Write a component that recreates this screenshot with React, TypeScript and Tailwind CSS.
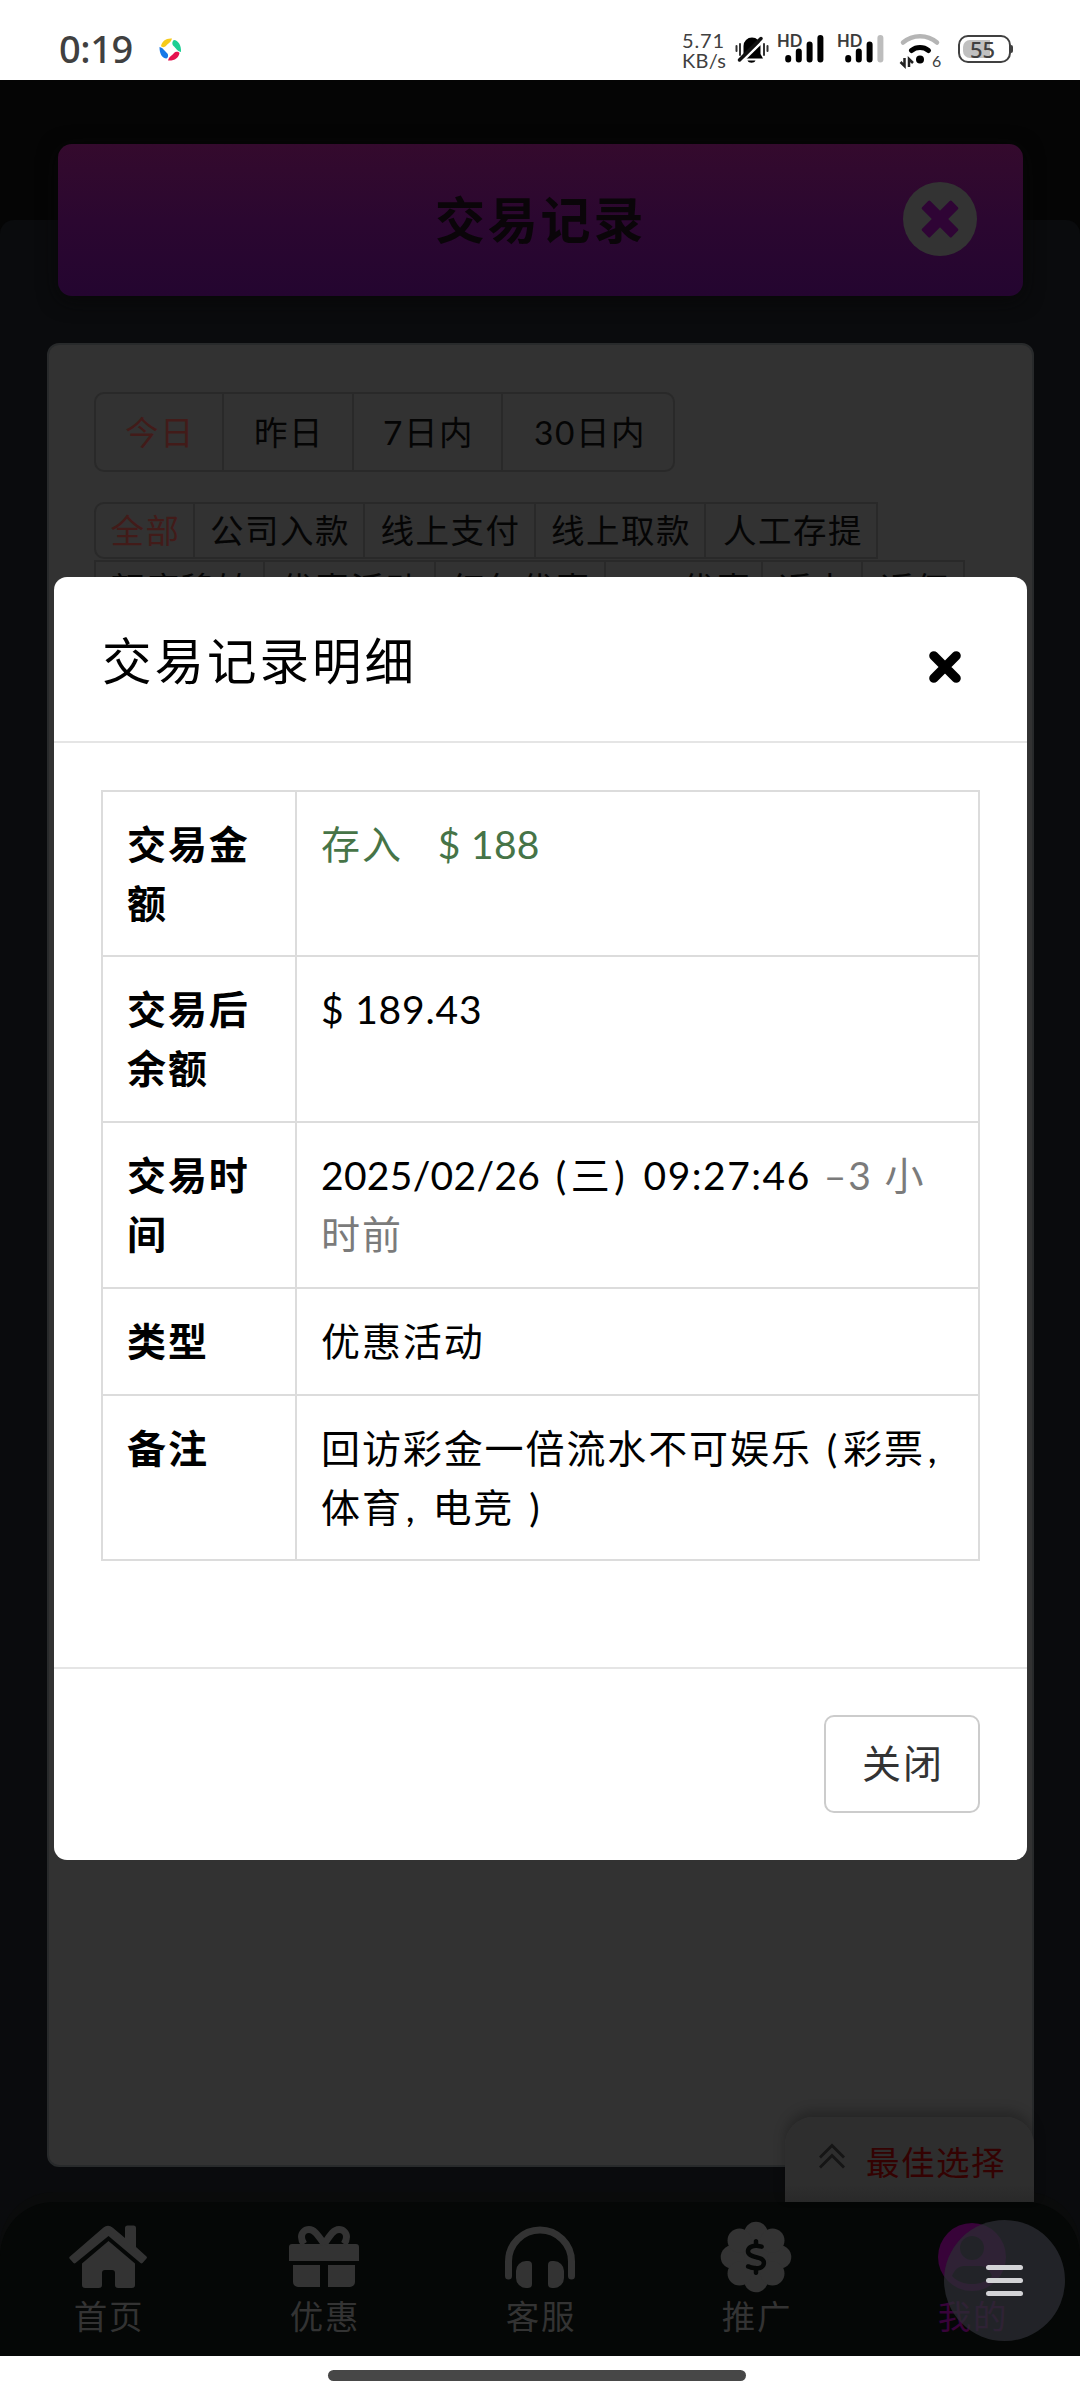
import { FaDollarSign } from "react-icons/fa6";
import type { ReactNode } from "react";

const ranges = [
  { label: "今日", width: "w-[128px]" },
  { label: "昨日", width: "w-[130px]" },
  { label: "7日内", width: "w-[149px]" },
  { label: "30日内", width: "w-[172px]" },
];

const typesTop = [
  { label: "全部", width: "w-[99px]" },
  { label: "公司入款", width: "w-[170px]" },
  { label: "线上支付", width: "w-[171px]" },
  { label: "线上取款", width: "w-[170px]" },
  { label: "人工存提", width: "w-[172px]" },
];

const typesBottom = [
  { label: "额度移转", width: "w-[169px]" },
  { label: "优惠活动", width: "w-[171px]" },
  { label: "红包优惠", width: "w-[170px]" },
  { label: "App优惠", width: "w-[157px]" },
  { label: "返水", width: "w-[100px]" },
  { label: "返佣", width: "w-[102px]" },
];

const details: { label: string; height: string; value: ReactNode }[] = [
  {
    label: "交易金额",
    height: "h-[165px]",
    value: (
      <span className="text-[#467447]">
        存入<span className="ml-[35px] tracking-[0.3px]">$ 188</span>
      </span>
    ),
  },
  {
    label: "交易后余额",
    height: "h-[166px]",
    value: <span className="tracking-[0.8px]">$ 189.43</span>,
  },
  {
    label: "交易时间",
    height: "h-[166px]",
    value: (
      <>
        <span className="tracking-[0.3px]">2025/02/26</span>
        <span className="ml-[5px] tracking-[0.5px]">
          {" "}(<span className="mx-[4px]">三</span>)
        </span>
        <span className="ml-[7px] tracking-[1.500px]"> 09:27:46</span>
        <span className="ml-px text-[#7b7b7b]">
          {" "}–3 小<br />
          时前
        </span>
      </>
    ),
  },
  { label: "类型", height: "h-[107px]", value: "优惠活动" },
  {
    label: "备注",
    height: "h-[165px]",
    value: (
      <>
        回访彩金一倍流水不可娱乐<span className="mr-[4px] ml-[3px]"> (</span>彩票<span className="ml-[3px]">,</span>
        <br />
        体育<span className="mr-[4px] ml-[3px]">,</span> 电竞<span className="ml-[3px]"> )</span>
      </>
    ),
  },
];

function HomeIcon() {
  return (
    <svg width="80" height="64" viewBox="0 0 80 64" fill="currentColor">
      <path d="M2 31.500 35.500 2.500a7 7 0 0 1 9 0L57 13V3a2.500 2.500 0 0 1 2.500-2.500h6A2.500 2.500 0 0 1 68 3v19l10.500 9.500a1.500 1.500 0 0 1 0 2l-4 4.500a1.500 1.500 0 0 1-2 0L40.500 11 7.500 38a1.500 1.500 0 0 1-2 0l-4-4.500a1.500 1.500 0 0 1 .5-2z" />
      <path d="M40.500 16 67 38.500V60a3 3 0 0 1-3 3H50a3 3 0 0 1-3-3V48a3 3 0 0 0-3-3h-7a3 3 0 0 0-3 3v12a3 3 0 0 1-3 3H17a3 3 0 0 1-3-3V38.500z" />
    </svg>
  );
}

function GiftIcon() {
  return (
    <svg width="72" height="64" viewBox="0 0 72 64" fill="currentColor">
      <path d="M4 19h64a3 3 0 0 1 3 3v14H1V22a3 3 0 0 1 3-3zM5 40h27v22H10a5 5 0 0 1-5-5zM40 40h27v17a5 5 0 0 1-5 5H40z" />
      <path
        d="M36.300 19C29 9 26 4.500 21 4.500a7.500 7.500 0 0 0-7.500 7.500c0 3 1 5 2.500 7M36.300 19C43 9 46 4.500 51 4.500a7.500 7.500 0 0 1 7.500 7.500c0 3-1 5-2.500 7"
        fill="none"
        stroke="currentColor"
        strokeWidth="7"
      />
    </svg>
  );
}

function HeadphonesIcon() {
  return (
    <svg width="72" height="64" viewBox="0 0 72 64" fill="currentColor">
      <path
        d="M4.500 51V36.500a31.500 31.500 0 0 1 63 0V51"
        fill="none"
        stroke="currentColor"
        strokeWidth="7"
        strokeLinecap="round"
      />
      <path d="M22 36h2a4 4 0 0 1 4 4v19a4 4 0 0 1-4 4h-2a10 10 0 0 1-10-10v-7a10 10 0 0 1 10-10zM50 36h-2a4 4 0 0 0-4 4v19a4 4 0 0 0 4 4h2a10 10 0 0 0 10-10v-7a10 10 0 0 0-10-10z" />
    </svg>
  );
}

function BadgeIcon() {
  return (
    <svg width="72" height="72" viewBox="0 0 72 72" fill="currentColor">
      <circle cx="36" cy="36" r="26" />
      <circle cx="36" cy="12.500" r="11.800" />
      <circle cx="36" cy="59.500" r="11.800" />
      <circle cx="12.500" cy="36" r="11.800" />
      <circle cx="59.500" cy="36" r="11.800" />
      <circle cx="19.500" cy="19.500" r="12" />
      <circle cx="52.500" cy="19.500" r="12" />
      <circle cx="19.500" cy="52.500" r="12" />
      <circle cx="52.500" cy="52.500" r="12" />
      <FaDollarSign x="18" y="18" size={36} color="#050706" />
    </svg>
  );
}

function UserIcon() {
  return (
    <svg width="68" height="68" viewBox="0 0 68 68">
      <circle cx="34" cy="34" r="34" fill="currentColor" />
      <circle cx="34" cy="25" r="12" fill="#050706" />
      <path d="M14 53c2.500-6.500 7-10 12-10h16c5 0 9.500 3.500 12 10-5 5.500-12 8-20 8s-15-2.500-20-8z" fill="#050706" />
    </svg>
  );
}

const navItems = [
  { label: "首页", icon: <HomeIcon />, color: "text-[#333333]" },
  { label: "优惠", icon: <GiftIcon />, color: "text-[#333333]" },
  { label: "客服", icon: <HeadphonesIcon />, color: "text-[#333333]" },
  { label: "推广", icon: <BadgeIcon />, color: "text-[#333333]" },
  { label: "我的", icon: <UserIcon />, color: "text-[#380339]" },
];

function SignalBars({ weak }: { weak?: boolean }) {
  return (
    <div className="flex h-[30px] w-[47px] items-start">
      <span className="h-4 w-[23px] text-[16.500px] leading-4 font-bold text-[#3c3c3c]">HD</span>
      <svg className="-ml-[15px] mt-px shrink-0" width="39" height="30" viewBox="0 0 39 30" strokeWidth="6" strokeLinecap="round">
        <path d="M3.200 24v1.500M13.800 17.500v8M24.600 10.500v15" stroke="#000" />
        <path d="M35.400 4v21.500" stroke={weak ? "#bdbdbd" : "#000"} />
      </svg>
    </div>
  );
}

function StatusBar() {
  return (
    <div className="flex h-20 justify-between bg-white pr-[67px] pl-[59px] text-[#404040]">
      <div className="flex">
        <span className="mt-[23px] w-[100px] font-['Noto_Sans'] text-[38px] leading-[50px] font-medium tracking-[-0.4px]">0:19</span>
        <svg className="mt-[38px]" width="23" height="23" viewBox="0 0 23 23">
          <path d="M2 8C3 3 7 0 13 .5c-1 4-4 5-6 7.500-1.500 1.600-4 1.500-5 0z" fill="#f6cb1c" />
          <path d="M15 2c4 .5 7.500 5 7 12-4-1-5-4-7.500-6-1.600-1.500-1.500-5 .5-6z" fill="#1ccf93" />
          <path d="M20.500 15c-1 5-5 8-11.500 7.500 1-4 4-5 6-7.500 1.500-1.600 4.500-1.500 5.500 0z" fill="#e5134f" />
          <path d="M7.500 20.500C3 20 .5 16 .5 9c4 1 5 4 7.500 6 1.600 1.500 1.500 4.500-.5 5.500z" fill="#1879e8" />
        </svg>
      </div>
      <div className="flex">
        <div className="mt-[31px] w-[53px] text-[20px] leading-[19.500px]">
          <div className="tracking-[0.9px]">5.71</div>
          <div className="tracking-[0.3px]">KB/s</div>
        </div>
        <svg className="mt-[36px] mr-[8px]" width="34" height="28" viewBox="0 0 34 28">
          <path d="M8.500 21V10a8.500 8.500 0 0 1 17 0v8l2.500 4.500H8zM12.500 24.500h8c-1 3-7 3-8 0z" fill="#000" />
          <path d="M1.500 10v5M5 8v11M29 8v11M32.500 10v5" stroke="#333" strokeWidth="2" strokeLinecap="round" />
          <path d="M6 26.500 29 4" stroke="#fff" strokeWidth="2.500" />
          <path d="M4.500 24 26 2.500" stroke="#111" strokeWidth="3.500" strokeLinecap="round" />
        </svg>
        <div className="mt-[33px] mr-[13px]"><SignalBars /></div>
        <div className="mt-[33px] mr-[15px]"><SignalBars weak /></div>
        <svg className="mt-[32px] mr-[14px]" width="46" height="42" viewBox="0 0 46 42" fill="none">
          <path d="M4 10.500a26 26 0 0 1 34 0" stroke="#b5b5b5" strokeWidth="4.500" strokeLinecap="round" />
          <path d="M12.500 18.500a14 14 0 0 1 17 0" stroke="#000" strokeWidth="5" strokeLinecap="round" />
          <circle cx="21" cy="27.500" r="4" fill="#000" />
          <path d="M5.500 26v8l-4-4M10 35v-8l4 4" stroke="#222" strokeWidth="2.500" />
          <text x="33" y="35" fontSize="16" fill="#404040" className="font-[Lato]">6</text>
        </svg>
        <div className="mt-[35px] -ml-px flex h-7 items-center">
          <div className="relative flex h-7 w-[53px] items-center justify-center rounded-[10px] border-[2.500px] border-[#404040]">
            <div className="absolute top-[2.500px] left-[2.500px] h-[18px] w-[27px] rounded-l-[7px] bg-[#c0c0c0]" />
            <span className="relative -ml-1 font-['Noto_Sans'] text-[22px] leading-6 font-medium">55</span>
          </div>
          <div className="h-2 w-[2px] rounded-r bg-[#404040]" />
        </div>
      </div>
    </div>
  );
}

function FilterGroup({ items, className }: { items: { label: string; width: string }[]; className: string }) {
  return (
    <div className={`flex w-fit overflow-hidden border-2 border-[#292929] text-[33.500px] tracking-[1.500px] whitespace-nowrap text-[#050505] ${className}`}>
      {items.map((item, i) => (
        <div
          key={item.label}
          className={`flex items-center justify-center pl-[2px] ${item.width} ${
            i < items.length - 1 ? "border-r-2 border-[#292929]" : "-mr-[2px]"
          } ${item.label === "今日" || item.label === "全部" ? "text-[#421b19]" : ""}`}
        >
          {item.label}
        </div>
      ))}
    </div>
  );
}

function DetailModal() {
  return (
    <div className="absolute top-[497px] left-[54px] flex h-[1283px] w-[973px] flex-col rounded-[13px] bg-white text-[39px] leading-[58.500px] tracking-[1.900px] text-black">
      {/* Header */}
      <div className="flex h-[166px] items-start justify-between border-b-2 border-[#e5e5e5] pt-[54px] pr-[66px] pl-[48px]">
        <h2 className="text-[49.500px] leading-[60px] tracking-[3px]">交易记录明细</h2>
        <svg className="mt-[20px]" width="32" height="32" viewBox="0 0 32 32" stroke="#000" strokeWidth="9.200" strokeLinecap="round">
          <path d="M4.800 4.800 27.200 27.200M27.200 4.800 4.800 27.200" />
        </svg>
      </div>

      {/* Detail rows */}
      <div className="h-[926px] border-b-2 border-[#e5e5e5] pt-[47px] pr-[47px] pl-[47px]">
        <div className="flex flex-col border-2 border-b-0 border-[#dcdcdc]">
          {details.map((row) => (
            <div key={row.label} className={`flex border-b-2 border-[#dcdcdc] ${row.height}`}>
              <div className="w-[194px] shrink-0 border-r-2 border-[#dcdcdc] pt-[23px] pl-[24px] font-bold">
                <div className="w-[130px] break-all">{row.label}</div>
              </div>
              <div className="pt-[23px] pl-[24px] whitespace-nowrap">{row.value}</div>
            </div>
          ))}
        </div>
      </div>

      {/* Footer */}
      <div className="flex flex-1 items-center justify-end pr-[47px] pb-[2px]">
        <button className="h-[98px] w-[156px] rounded-[10px] border-2 border-[#cccccc] pl-[2px] text-[#333333]">关闭</button>
      </div>
    </div>
  );
}

export default function App() {
  return (
    <div className="flex h-[2400px] w-[1080px] flex-col overflow-hidden bg-white font-[Lato,'Noto_Sans_CJK_SC',sans-serif]">
      <StatusBar />

      <main className="relative flex h-[2276px] flex-col overflow-hidden bg-[#050505] pt-[140px]">
        <div className="flex flex-1 flex-col rounded-t-[14px] bg-[#0a0b0d]">
          {/* Title bar */}
          <div className="-mt-[76px] ml-[58px] flex h-[152px] w-[965px] shrink-0 items-center justify-between rounded-[14px] bg-linear-to-b from-[#340a2d] via-[#2b0730] to-[#240530] pr-[46px] pl-[377px] shadow-[0_4px_20px_rgba(7,8,7,0.8)]">
            <h1 className="text-[50px] leading-[60px] font-bold tracking-[2.800px] text-[#0a0509]">交易记录</h1>
            <svg className="-mt-0.5" width="74" height="74" viewBox="0 0 74 74">
              <circle cx="37" cy="37" r="37" fill="#333333" />
              <g fill="#2f0435" transform="rotate(45 37 37)">
                <rect x="16" y="31.200" width="42" height="11.600" rx="1.500" />
                <rect x="31.200" y="16" width="11.600" height="42" rx="1.500" />
              </g>
            </svg>
          </div>

          {/* Records card */}
          <div className="mt-[47px] ml-[47px] h-[1824px] w-[987px] shrink-0 rounded-[12px] border-2 border-[#282a2b] bg-[#323232] pt-[47px] pl-[45px]">
            <FilterGroup items={ranges} className="h-20 rounded-[10px]" />
            <FilterGroup items={typesTop} className="mt-[30px] h-[57px] rounded-l-[10px]" />
            <FilterGroup items={typesBottom} className="mt-px h-[57px]" />
          </div>

          {/* Bottom navigation */}
          <nav className="mt-auto grid h-[154px] grid-cols-5 rounded-t-[54px] bg-[#050706] shadow-[0_-10px_0_#0a0b0b]">
            {navItems.map((item) => (
              <div key={item.label} className={`flex flex-col items-center ${item.color}`}>
                <div className="flex h-[92px] items-center pt-[18px]">{item.icon}</div>
                <span className="pl-[2px] text-[33.500px] leading-[44px] tracking-[1.800px]">{item.label}</span>
              </div>
            ))}
          </nav>
        </div>

        {/* Pull-up tab */}
        <div className="absolute top-[2037px] left-[785px] flex h-[85px] w-[249px] items-center rounded-t-[28px] bg-linear-to-b from-[#2e2e2e] from-80% to-[#292929] pl-[34px] shadow-[0_-6px_12px_rgba(0,0,0,0.25)]">
          <svg className="-mt-2" width="26" height="26" viewBox="0 0 26 26" fill="none" stroke="#151515" strokeWidth="2.800">
            <path d="M1 14.500 13 2.500l12 12M1 24.500l12-12 12 12" />
          </svg>
          <span className="mt-[5px] ml-[21px] text-[33.500px] tracking-[1.500px] text-[#340202]">最佳选择</span>
        </div>

        <DetailModal />

        {/* Floating menu button */}
        <div className="absolute top-[2140px] left-[944px] flex h-[121px] w-[121px] flex-col items-center justify-center gap-2 rounded-full bg-[#2c2e34]/75">
          <div className="h-[5px] w-[37px] rounded-full bg-[#d3d3d6]" />
          <div className="h-[5px] w-[37px] rounded-full bg-[#d3d3d6]" />
          <div className="h-[5px] w-[37px] rounded-full bg-[#d3d3d6]" />
        </div>
      </main>

      {/* Gesture bar */}
      <div className="flex flex-1 justify-center pt-[14px] pr-[6px]">
        <div className="h-[11px] w-[418px] rounded-full bg-[#474747]" />
      </div>
    </div>
  );
}
